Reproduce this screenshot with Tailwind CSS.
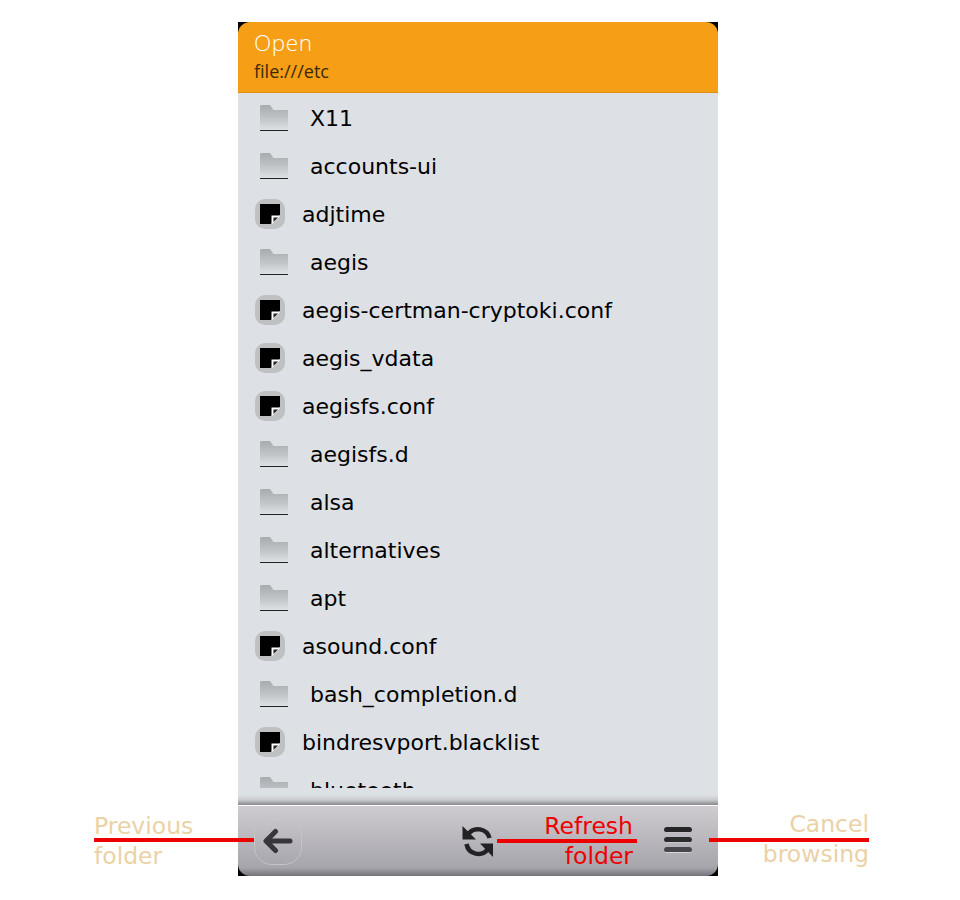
<!DOCTYPE html>
<html lang="en">
<head>
  <meta charset="UTF-8">
  <title>Open</title>
  <script src="https://cdn.jsdelivr.net/npm/@tailwindcss/browser@4"></script>
</head>
<body class="bg-white font-['DejaVu_Sans',sans-serif]">
  <div class="relative w-[960px] h-[900px] overflow-hidden">
    <!-- Phone -->
    <div class="absolute left-[238px] top-[22px] w-[480px] h-[854px] bg-black flex flex-col">
      <!-- Header -->
      <div class="h-[71px] bg-[#f59e16] rounded-tl-[12px] rounded-tr-[12px] border-b border-[#e08e10] pl-4 flex flex-col shrink-0">
        <div class="text-[22.500px] leading-[26px] mt-[8px] text-white font-['Open_Sans',sans-serif] font-light tracking-[0.6px]">Open</div>
        <div class="text-[18px] leading-[22px] mt-[4px] text-[#3a2a08] font-['Open_Sans',sans-serif]">file:///etc</div>
      </div>
      <!-- List -->
      <div class="h-[712px] bg-[#dde1e5] shrink-0 relative overflow-hidden">
        <div id="rows" class="h-[695px] overflow-hidden pt-px text-[22px] text-black"></div>
        <div class="absolute left-0 right-0 bottom-0 h-[10px] bg-gradient-to-b from-[#dde1e5] via-[#c8cacd] to-[#87878b]"></div>
      </div>
      <!-- Toolbar -->
      <div class="flex-1 border-t border-white bg-[linear-gradient(to_bottom,#cfccd1,#a6a5ab_88%,#75747a)] rounded-bl-[12px] rounded-br-[12px] flex items-center justify-between pl-[16px] pr-[16px]">
        <div class="w-[48px] h-[48px] rounded-[18px] border border-[#c4c3c8] flex items-center justify-center">
          <svg width="30" height="26" viewBox="0 0 30 26" fill="none" stroke="#36363b" stroke-width="5" stroke-linecap="round" stroke-linejoin="round"><path d="M27 13H4M12.500 3.500L3 13l9.500 9.500"/></svg>
        </div>
        <svg width="32" height="33" viewBox="0 0 32 33" fill="none" stroke="#222225" stroke-width="4.500" class="mr-[208px]"><path d="M6 9.500A12 12 0 0 1 27.500 13"/><path d="M26 24A12 12 0 0 1 4.500 19"/><path d="M0.500 1v13.500H14z" fill="#222225" stroke="none"/><path d="M31 32V18.500H18z" fill="#222225" stroke="none"/></svg>
      </div>
    </div>

    <!-- Menu icon -->
    <div class="absolute left-[664px] top-[827px] w-[28px] flex flex-col gap-[4px]">
      <div class="h-[6px] rounded-full bg-[#252527] border-b border-[#c4c4c8]"></div>
      <div class="h-[6px] rounded-full bg-[#2b2b2e] border-b border-[#c8c8cc]"></div>
      <div class="h-[6px] rounded-full bg-[#47474b] border-b border-[#d8d8da]"></div>
    </div>

    <!-- Annotations -->
    <div class="absolute left-[94px] top-[811px] text-[23.500px] leading-[30px] text-[#ebd2a6]">Previous<br>folder</div>
    <div class="absolute left-[94px] top-[838px] w-[160px] h-[4px] bg-[#ee0000]"></div>
    <div class="absolute left-[497px] top-[811px] w-[136px] text-right text-[23.500px] leading-[30px] text-[#ee0000]">Refresh<br>folder</div>
    <div class="absolute left-[497px] top-[839px] w-[140px] h-[4px] bg-[#ee0000]"></div>
    <div class="absolute left-[709px] top-[809px] w-[160px] text-right text-[23.500px] leading-[30px] text-[#ebd2a6]">Cancel<br>browsing</div>
    <div class="absolute left-[709px] top-[838px] w-[160px] h-[4px] bg-[#ee0000]"></div>
  </div>

  <script>
    // d = folder, f = file
    const entries = [
      ['d', 'X11'], ['d', 'accounts-ui'], ['f', 'adjtime'], ['d', 'aegis'],
      ['f', 'aegis-certman-cryptoki.conf'], ['f', 'aegis_vdata'], ['f', 'aegisfs.conf'],
      ['d', 'aegisfs.d'], ['d', 'alsa'], ['d', 'alternatives'], ['d', 'apt'],
      ['f', 'asound.conf'], ['d', 'bash_completion.d'], ['f', 'bindresvport.blacklist'],
      ['d', 'bluetooth']
    ];

    const folderIcon = `<svg width="30" height="26" viewBox="0 0 30 26" class="mr-[21px]">
      <defs><linearGradient id="fold" x1="0" y1="0" x2="0" y2="1"><stop offset="0" stop-color="#a9acaf"/><stop offset="0.5" stop-color="#bfc2c5"/><stop offset="1" stop-color="#dfe2e5"/></linearGradient></defs>
      <path d="M1 1.500Q1 0 2.500 0H11L14.500 5H29V25H1z" fill="url(#fold)"/>
      <path d="M1 25.500H29" stroke="#222" stroke-width="1"/></svg>`;

    const fileIcon = `<svg width="30" height="30" viewBox="0 0 30 30" class="mr-[17px]">
      <rect width="30" height="30" rx="10" fill="#bfc0c1"/>
      <path d="M5 5H25V16L16 25H5z" fill="#000"/>
      <path d="M16.500 16.500H25V17L17 25H16.500z" fill="#fff"/>
      <path d="M18.500 18.500H23L18.500 23z" fill="#222"/></svg>`;

    document.querySelector('#rows').innerHTML = entries.map(([kind, name]) => kind === 'd'
      ? `<div class="h-12 flex items-center pl-[21px]">${folderIcon}<span>${name}</span></div>`
      : `<div class="h-12 flex items-center pl-[17px]">${fileIcon}<span>${name}</span></div>`
    ).join('');
  </script>
</body>
</html>
